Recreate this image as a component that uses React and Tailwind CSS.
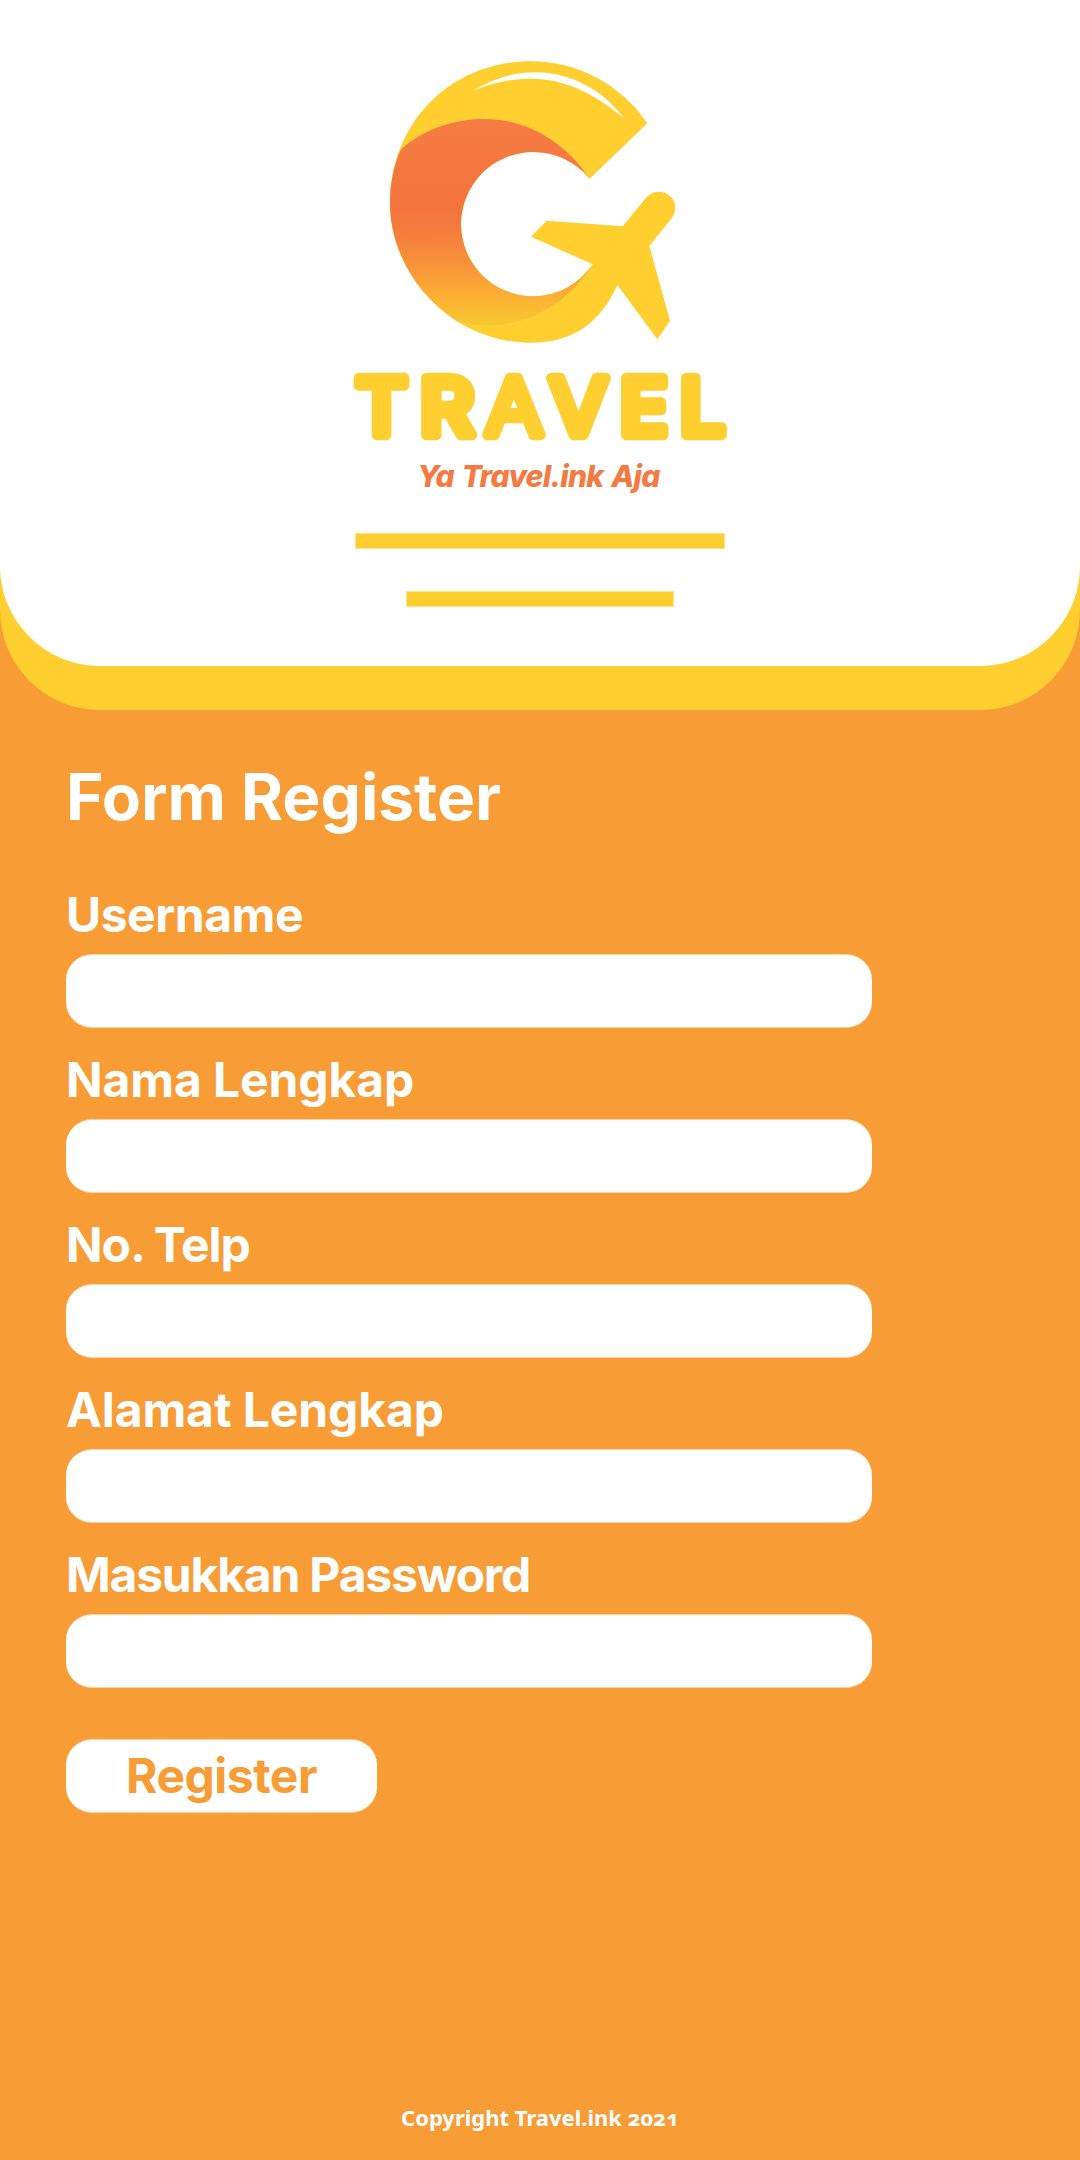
const FIELDS = [
  { name: 'username', label: 'Username', type: 'text', tracking: 'tracking-[-0.45px]' },
  { name: 'fullname', label: 'Nama Lengkap', type: 'text', tracking: 'tracking-[-0.1px]' },
  { name: 'phone', label: 'No. Telp', type: 'tel', tracking: 'tracking-[-1.05px]' },
  { name: 'address', label: 'Alamat Lengkap', type: 'text', tracking: 'tracking-[-0.1px]' },
  { name: 'password', label: 'Masukkan Password', type: 'password', tracking: 'tracking-[-1.2px]' },
];

// Centre and advance width of every letter of the wordmark.
const WORDMARK = [
  { char: 'T', x: 41.5, width: 52, weight: 'font-medium' },
  { char: 'R', x: 107, width: 54, weight: 'font-medium' },
  { char: 'A', x: 174, width: 57, weight: 'font-light' },
  { char: 'V', x: 238.5, width: 58, weight: 'font-normal' },
  { char: 'E', x: 304, width: 48, weight: 'font-medium' },
  { char: 'L', x: 362.5, width: 45, weight: 'font-medium' },
];

function LogoMark() {
  return (
    <svg className="h-80 w-[400px] shrink-0" viewBox="0 0 1200 960" aria-label="Travel logo">
      <defs>
        <linearGradient id="swoosh" gradientUnits="userSpaceOnUse" x1="500" y1="236" x2="508" y2="856">
          <stop offset="0" stopColor="#f57c43" />
          <stop offset="0.43" stopColor="#f4743d" />
          <stop offset="0.56" stopColor="#f57e3d" />
          <stop offset="0.7" stopColor="#f8933a" />
          <stop offset="0.85" stopColor="#fcae33" />
          <stop offset="0.93" stopColor="#fabc32" />
          <stop offset="1" stopColor="#f3ca33" />
        </linearGradient>
      </defs>
      <path
        fill="#ffcf2f"
        d="M922 250C840 130 710 64 570 64C330 64 150 250 150 490C150 705 335 908 570 908C700 908 780 850 832 735L952 898L990 843L928 618L993 538C1022 499 998 455 955 455C940 455 928 462 918 473L848 559L620 542L573 590L758 673A217 217 0 0 1 580 769A217 217 0 0 1 363 552A217 217 0 0 1 580 336A217 217 0 0 1 749 416Z"
      />
      <path
        fill="url(#swoosh)"
        d="M182 329C250 268 340 237 430 237C560 237 670 300 749 416A217 217 0 0 0 580 336A217 217 0 0 0 363 552A217 217 0 0 0 580 769A217 217 0 0 0 758 673C690 780 580 858 440 856C400 856 368 852 340 836C225 757 150 625 150 490C150 433 161 377 182 329Z"
      />
      <path
        fill="#fff"
        d="M400 152C470 110 530 97 585 97C690 97 790 150 852 235C760 157 670 116 575 116C510 116 455 128 400 152Z"
      />
    </svg>
  );
}

function Wordmark() {
  return (
    <svg className="h-[110px] w-[400px] shrink-0" viewBox="0 0 400 110">
      <g
        className="font-['Inter',sans-serif]"
        fontSize="78"
        fill="#ffcf2f"
        stroke="#ffcf2f"
        strokeWidth="10.5"
        strokeLinejoin="round"
        textAnchor="middle"
      >
        {WORDMARK.map(({ char, x, width, weight }) => (
          <text
            key={char}
            className={weight}
            x={x}
            y="75"
            textLength={width}
            lengthAdjust="spacingAndGlyphs"
          >
            {char}
          </text>
        ))}
      </g>
    </svg>
  );
}

function Field({ name, label, type, tracking }) {
  return (
    <div className="flex flex-col gap-[10px]">
      <label htmlFor={name} className={`text-5xl leading-[58px] font-bold ${tracking}`}>
        {label}
      </label>
      <input
        id={name}
        name={name}
        type={type}
        className="h-[74px] w-[806px] rounded-[26px] border-y border-[#fdd3a6] bg-white px-6 text-4xl text-[#f89c36] outline-none"
      />
    </div>
  );
}

export default function App() {
  return (
    <div className="flex h-[2160px] w-[1080px] flex-col bg-[#f89c36] font-['Inter',sans-serif] text-white">
      <header className="rounded-b-[100px] bg-[#ffcf2f] pb-11">
        <div className="flex h-[666px] flex-col items-center rounded-b-[100px] bg-white pt-10">
          <LogoMark />
          <Wordmark />
          <p className="-mt-4 mr-[3px] text-[30px] leading-[44px] font-extrabold tracking-[-0.75px] text-[#f57a42] italic [font-feature-settings:'cv11'] [word-spacing:2px]">
            Ya Travel.ink Aja
          </p>
          <div className="mt-[35px] h-4 w-[370px] border border-[#ffe388] bg-[#ffcf2f]" />
          <div className="mt-[42px] h-4 w-[268px] border border-[#ffe388] bg-[#ffcf2f]" />
        </div>
      </header>

      <form className="flex flex-1 flex-col items-start pt-12 pl-[66px]">
        <h1 className="text-[64px] leading-[77px] font-bold">Form Register</h1>
        <div className="mt-[51px] flex flex-col gap-[23px]">
          {FIELDS.map((field) => (
            <Field key={field.name} {...field} />
          ))}
        </div>
        <button
          type="button"
          className="mt-[51px] h-[74px] w-[311px] rounded-[26px] border-y border-[#fdd3a6] bg-white text-5xl font-bold tracking-[-0.5px] text-[#f89c36]"
        >
          Register
        </button>
      </form>

      <footer className="pb-7 text-center font-['Noto_Sans',sans-serif] text-[22px] leading-[30px] font-bold oldstyle-nums">
        Copyright Travel.ink 2021
      </footer>
    </div>
  );
}
